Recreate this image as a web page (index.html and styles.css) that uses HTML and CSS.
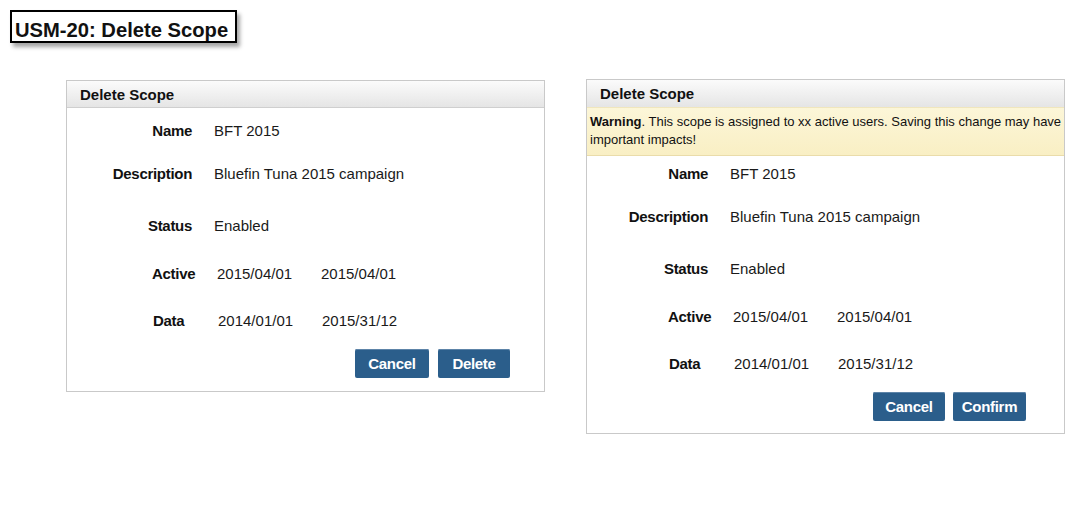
FILE: index.html
```html
<!DOCTYPE html>
<html>
<head>
<meta charset="utf-8">
<link rel="stylesheet" href="styles.css">
</head>
<body>
<div class="page">
  <h1 class="page-title">USM-20: Delete Scope</h1>
  <div class="panels">
    <section class="panel panel--left">
      <header class="panel-header">Delete Scope</header>
      <div class="panel-body">
        <div class="field field--name"><span class="field-label">Name</span><span class="field-value">BFT 2015</span></div>
        <div class="field field--desc"><span class="field-label">Description</span><span class="field-value">Bluefin Tuna 2015 campaign</span></div>
        <div class="field field--status"><span class="field-label">Status</span><span class="field-value">Enabled</span></div>
        <div class="range range--active"><span class="range-label">Active</span><span class="range-value">2015/04/01</span><span class="range-value">2015/04/01</span></div>
        <div class="range range--data"><span class="range-label">Data</span><span class="range-value">2014/01/01</span><span class="range-value">2015/31/12</span></div>
        <div class="actions">
          <button class="btn btn--cancel">Cancel</button>
          <button class="btn btn--delete">Delete</button>
        </div>
      </div>
    </section>
    <section class="panel panel--right">
      <header class="panel-header">Delete Scope</header>
      <p class="warning"><b class="warning-title">Warning</b>. This scope is assigned to xx active users. Saving this change may have important impacts!</p>
      <div class="panel-body panel-body--warned">
        <div class="field field--name"><span class="field-label">Name</span><span class="field-value">BFT 2015</span></div>
        <div class="field field--desc"><span class="field-label">Description</span><span class="field-value">Bluefin Tuna 2015 campaign</span></div>
        <div class="field field--status"><span class="field-label">Status</span><span class="field-value">Enabled</span></div>
        <div class="range range--active"><span class="range-label">Active</span><span class="range-value">2015/04/01</span><span class="range-value">2015/04/01</span></div>
        <div class="range range--data"><span class="range-label">Data</span><span class="range-value">2014/01/01</span><span class="range-value">2015/31/12</span></div>
        <div class="actions actions--right">
          <button class="btn btn--cancel">Cancel</button>
          <button class="btn btn--confirm">Confirm</button>
        </div>
      </div>
    </section>
  </div>
</div>
</body>
</html>
```
FILE: styles.css
```css
* { box-sizing: border-box; }
html, body { margin: 0; padding: 0; background: #fff; }
body {
  font-family: "Liberation Sans", Arial, sans-serif;
  color: #111;
  width: 1075px;
  height: 509px;
  overflow: hidden;
}
.page { padding: 10px 0 0 10px; }
.page-title {
  margin: 0;
  width: 227px;
  height: 33px;
  border: 2px solid #000;
  box-shadow: 3px 4px 4px rgba(0,0,0,0.35);
  font-size: 20.2px;
  font-weight: bold;
  line-height: 36px;
  padding-left: 3px;
  color: #111;
  white-space: nowrap;
}
.panels {
  display: flex;
  align-items: flex-start;
  gap: 41px;
  margin-top: 37px;
  padding-left: 56px;
}
.panel {
  width: 479px;
  border: 1px solid #c9c9c9;
  background: #fff;
}
.panel--right { margin-top: -1px; }
.panel-header {
  height: 27px;
  background: linear-gradient(#fbfbfb, #e5e5e5);
  border-bottom: 1px solid #cfcfcf;
  font-size: 15px;
  font-weight: bold;
  line-height: 27px;
  padding-left: 13px;
}
.panel--right .panel-header { border-bottom: none; height: 27px; }
.warning {
  margin: 0;
  background: linear-gradient(#fcf6d8, #f9efc4);
  border-top: 1px solid #f0e6bd;
  border-bottom: 1px solid #eadcaa;
  font-size: 13px;
  line-height: 18px;
  padding: 5px 0 6px 3px;
  color: #111;
}
.warning-title { font-weight: bold; }
.panel-body { padding: 13px 0 13px 0; }
.panel-body--warned { padding-top: 8px; padding-bottom: 12px; }
.field, .range {
  display: flex;
  height: 20px;
  line-height: 20px;
  font-size: 15px;
}
.field-label {
  width: 125px;
  text-align: right;
  font-weight: bold;
  letter-spacing: -0.3px;
}
.panel-body--warned .field-label { width: 121px; }
.field-value { margin-left: 22px; color: #1a1a1a; }
.field--desc { margin-top: 23px; }
.field--status { margin-top: 32px; }
.range--active { margin-top: 28px; }
.range--data { margin-top: 27px; }
.range-label {
  margin-left: 85px;
  width: 65px;
  font-weight: bold;
  letter-spacing: -0.3px;
}
.range--data .range-label { margin-left: 86px; }
.panel-body--warned .range-label { margin-left: 81px; }
.panel-body--warned .range--data .range-label { margin-left: 82px; }
.range-value { width: 104px; color: #1a1a1a; }
.actions {
  display: flex;
  justify-content: flex-end;
  gap: 9px;
  margin-top: 18px;
  padding-right: 34px;
}
.actions--right { padding-right: 38px; gap: 8px; }
.btn {
  height: 29px;
  border: none;
  border-radius: 2px;
  background: #2b5e8b;
  color: #fff;
  font-family: "Liberation Sans", Arial, sans-serif;
  font-size: 15px;
  font-weight: bold;
  letter-spacing: -0.3px;
  padding: 0;
  box-shadow: inset 0 1px 0 #5d84a8;
}
.btn--cancel { width: 74px; }
.btn--delete { width: 72px; }
.panel-body--warned .btn--cancel { width: 72px; }
.btn--confirm { width: 73px; }
```
